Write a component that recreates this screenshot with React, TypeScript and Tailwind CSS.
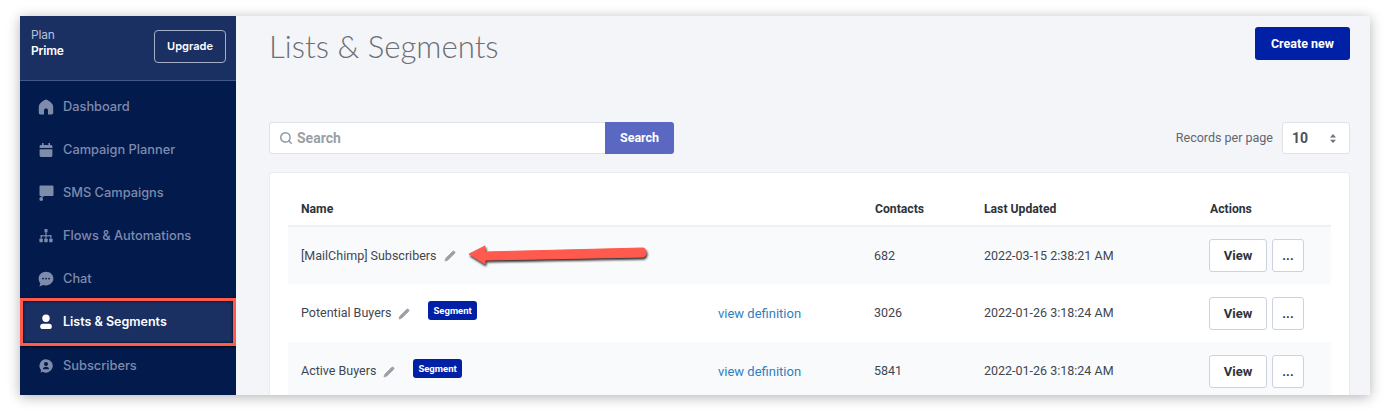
import { Search, Pencil } from "lucide-react";
import type { ReactNode } from "react";

const iconClass = "w-4 h-4 fill-current";

const icons: Record<string, ReactNode> = {
  home: (
    <svg viewBox="0 0 16 16" className={iconClass}>
      <path d="M8 .6 C11.5 1.6 15.200 4.800 15.200 8 V13.800 C15.200 14.800 14.600 15.400 13.600 15.400 H10 V11.200 C10 10.200 9.100 9.500 8 9.500 C6.900 9.500 6 10.200 6 11.200 V15.400 H2.400 C1.400 15.400 .8 14.800 .8 13.800 V8 C.8 4.800 4.500 1.600 8 .6 Z" />
    </svg>
  ),
  calendar: (
    <svg viewBox="0 0 16 16" className={iconClass}>
      <path d="M4 1h1.600v2h4.800V1H12v2h1c.8 0 1.400.6 1.400 1.400V6H1.600V4.400C1.600 3.600 2.200 3 3 3h1V1Z" />
      <path d="M1.600 7.200h12.800v6.400c0 .8-.6 1.400-1.400 1.400H3c-.8 0-1.400-.6-1.400-1.400V7.200Z" />
    </svg>
  ),
  sms: (
    <svg viewBox="0 0 16 16" className={iconClass}>
      <path d="M1.500 1.600 C1.500 .9 2 .5 2.700 .5 H14.300 C15 .5 15.500 .9 15.500 1.600 V10 C15.500 10.700 15 11.100 14.300 11.100 H6.600 L3.400 12.400 V11.100 H2.700 C2 11.100 1.500 10.700 1.500 10 Z" />
      <circle cx="3.200" cy="14" r="1.900" />
    </svg>
  ),
  flows: (
    <svg viewBox="0 0 16 16" className={iconClass}>
      <rect x="6.500" y="1" width="3" height="3.400" rx=".6" />
      <rect x="7.400" y="4.400" width="1.200" height="6" />
      <rect x="2.600" y="7.200" width="10.800" height="1.200" />
      <rect x="2.600" y="7.200" width="1.200" height="3" />
      <rect x="12.200" y="7.200" width="1.200" height="3" />
      <rect x="1.400" y="10.600" width="3.400" height="3.600" rx=".6" />
      <rect x="6.300" y="10.600" width="3.400" height="3.600" rx=".6" />
      <rect x="11.200" y="10.600" width="3.400" height="3.600" rx=".6" />
    </svg>
  ),
  chat: (
    <svg viewBox="0 0 16 16" className="w-4 h-4">
      <path
        className="fill-current"
        d="M8 .8c4 0 7.400 2.900 7.400 6.800S12 14.400 8 14.400c-1 0-2-.2-2.900-.5L1.400 15.400l.9-3.200C1.200 11 .6 9.400.6 7.600.6 3.700 4 .8 8 .8Z"
      />
      <circle cx="5" cy="7.600" r=".9" fill="#031a4d" />
      <circle cx="8" cy="7.600" r=".9" fill="#031a4d" />
      <circle cx="11" cy="7.600" r=".9" fill="#031a4d" />
    </svg>
  ),
  person: (
    <svg viewBox="0 0 16 16" className={iconClass}>
      <circle cx="8" cy="4.200" r="3.700" />
      <rect x="2.200" y="9.800" width="11.600" height="5.200" rx="2.600" />
    </svg>
  ),
  subscriber: (
    <svg viewBox="0 0 16 16" className="w-4 h-4">
      <path
        className="fill-current"
        d="M8 1.200a6.700 6.700 0 1 1-3.300 12.500l-2.200.9.600-2.300A6.700 6.700 0 0 1 8 1.200Z"
      />
      <circle cx="8" cy="6" r="2" fill="#031a4d" />
      <path d="M4.800 11.200c.4-1.700 1.600-2.500 3.200-2.500s2.800.8 3.200 2.500Z" fill="#031a4d" />
    </svg>
  ),
};

const navItems = [
  { label: "Dashboard", icon: "home" },
  { label: "Campaign Planner", icon: "calendar" },
  { label: "SMS Campaigns", icon: "sms" },
  { label: "Flows & Automations", icon: "flows" },
  { label: "Chat", icon: "chat" },
  { label: "Lists & Segments", icon: "person", active: true },
  { label: "Subscribers", icon: "subscriber" },
];

const rows = [
  { name: "[MailChimp] Subscribers", contacts: "682", updated: "2022-03-15 2:38:21 AM", h: "h-[57px]", tint: true },
  { name: "Potential Buyers", contacts: "3026", updated: "2022-01-26 3:18:24 AM", h: "h-[58px]", segment: true },
  { name: "Active Buyers", contacts: "5841", updated: "2022-01-26 3:18:24 AM", h: "h-[58px]", segment: true, tint: true },
];

function Sidebar() {
  return (
    <aside className="w-[216px] shrink-0 bg-[#031a4d] font-['Inter',sans-serif]">
      <div className="h-[65px] bg-[#1a2f62] border-b border-[#45578a] pl-[11px] pr-[10px] flex items-start justify-between">
        <div className="pt-[11px] text-[12px] leading-[16px] tracking-[-0.2px]">
          <div className="text-[#b9c1d6]">Plan</div>
          <div className="text-white font-semibold">Prime</div>
        </div>
        <button className="mt-[14px] w-[72px] h-[33px] rounded border border-[#a4aec9] text-white text-[11px] font-semibold">
          Upgrade
        </button>
      </div>
      <nav className="pt-[4px]">
        {navItems.map((item) =>
          item.active ? (
            <div
              key={item.label}
              className="h-[48px] -mt-[2px] -mb-[2px] border-[3px] border-[#ff5a4d] shadow-[1px_1px_3px_rgba(0,0,0,0.8),inset_0_0_3px_rgba(0,0,0,0.9)] bg-[#1a2f62] flex items-center pl-[15px] text-white"
            >
              <span className="w-[25px] shrink-0">{icons[item.icon]}</span>
              <span className="text-[12.5px] font-semibold">{item.label}</span>
            </div>
          ) : (
            <div key={item.label} className="h-[43px] flex items-center pl-[18px] text-[#7e8bab]">
              <span className="w-[25px] shrink-0">{icons[item.icon]}</span>
              <span className="text-[12.8px] font-medium">{item.label}</span>
            </div>
          ),
        )}
      </nav>
    </aside>
  );
}

function Row({ row }: { row: (typeof rows)[number] }) {
  return (
    <div className={`${row.h} flex items-center text-[12.5px] text-[#3f4650] ${row.tint ? "bg-[#f9fafc]" : "bg-white"}`}>
      <div className="w-[430px] pl-[13px] pt-px flex items-center shrink-0">
        <span>{row.name}</span>
        <Pencil className="w-3 h-3 ml-[7px] text-[#9ca1a8] fill-[#9ca1a8]" strokeWidth={1.5} />
        {row.segment && (
          <span className="ml-[18px] -mt-[7px] h-[19px] px-[5px] rounded-[3px] bg-[#0021a5] text-white text-[9.5px] font-bold leading-[19px]">
            Segment
          </span>
        )}
      </div>
      <div className="w-[156px] pt-px shrink-0 text-[13px] text-[#2f7fc1]">{row.segment && "view definition"}</div>
      <div className="w-[110px] pt-px shrink-0">{row.contacts}</div>
      <div className="w-[225px] pt-px shrink-0">{row.updated}</div>
      <div className="flex gap-[5px] text-[13px]">
        <button className="w-[58px] h-[33px] pt-px rounded-[3px] border border-[#ccd3dd] bg-white font-bold text-[#2d333b]">
          View
        </button>
        <button className="w-[32px] h-[33px] pt-px rounded-[3px] border border-[#ccd3dd] bg-white font-bold text-[#2d333b]">
          ...
        </button>
      </div>
    </div>
  );
}

export default function App() {
  return (
    <div className="w-[1390px] h-[419px] bg-white pt-4 px-5 relative overflow-hidden font-['Roboto',sans-serif]">
      <div className="h-[379px] flex overflow-hidden shadow-[0_2px_12px_rgba(0,0,0,0.3)]">
        <Sidebar />
        <main className="flex-1 bg-[#f4f5f8] pl-[33px] pr-[20px] pt-[11px]">
          <div className="flex justify-between h-[95px]">
            <h1 className="font-['Lato',sans-serif] font-light text-[31.2px] leading-[38px] text-[#6b6f76]">
              Lists &amp; Segments
            </h1>
            <button className="w-[95px] h-[33px] pt-px rounded-[3px] bg-[#0021a5] text-white text-[12.5px] font-bold">
              Create new
            </button>
          </div>

          <div className="flex justify-between items-center h-[32px]">
            <div className="flex">
              <div className="w-[336px] h-[32px] bg-white border border-[#dfe2e8] border-r-0 rounded-l-[3px] flex items-center pl-[9px] text-[#9a9fa6]">
                <Search className="w-[14px] h-[14px] text-[#8c99a8]" strokeWidth={2.5} />
                <span className="ml-[4px] text-[14px] font-bold">Search</span>
              </div>
              <button className="w-[69px] h-[32px] rounded-r-[3px] bg-[#5b68c2] text-white text-[12.5px] font-bold">
                Search
              </button>
            </div>
            <div className="flex items-center">
              <span className="text-[12.5px] text-[#5f6670] mr-[9px]">Records per page</span>
              <div className="w-[68px] h-[32px] bg-white border border-[#dfe2e8] rounded-[3px] flex items-center justify-between pl-[9px] pr-[13px] text-[14px] font-bold text-[#4b5159]">
                10
                <svg viewBox="0 0 8 12" className="w-[6px] h-[9px] fill-[#6b7280]">
                  <path d="M4 0 8 4.500H0Z" />
                  <path d="M4 12 0 7.500H8Z" />
                </svg>
              </div>
            </div>
          </div>

          <div className="mt-[18px] bg-white border border-[#e9ebf0] rounded-[3px] px-[18px] h-[260px]">
            <div className="h-[54px] flex items-end pb-[7px] border-b-2 border-[#eef0f4] text-[12.2px] font-bold text-[#2d333b]">
              <div className="w-[587px] pl-[13px] shrink-0">Name</div>
              <div className="w-[109px] shrink-0">Contacts</div>
              <div className="w-[226px] shrink-0">Last Updated</div>
              <div>Actions</div>
            </div>
            {rows.map((row) => (
              <Row key={row.name} row={row} />
            ))}
          </div>
        </main>
      </div>

      {/* annotation arrow */}
      <svg className="absolute left-[464px] top-[240px]" width="190" height="32" viewBox="0 0 190 32">
        <path
          d="M5 14 L21 6 L21 12 L179 8 C183 8 183 17 179 17 L21 20 L21 24 Z"
          fill="#ff5a4d"
          stroke="#ff5a4d"
          strokeWidth="1"
          strokeLinejoin="round"
          style={{ filter: "drop-shadow(1px 2px 1px rgba(0,0,0,0.8))" }}
        />
      </svg>
    </div>
  );
}
